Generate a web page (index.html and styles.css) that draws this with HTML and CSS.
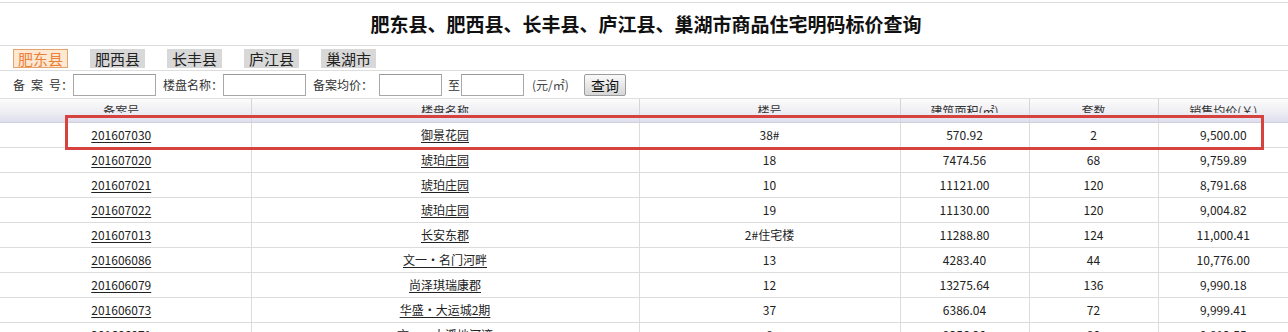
FILE: index.html
```html
<!DOCTYPE html>
<html lang="zh-CN">
<head>
<meta charset="utf-8">
<title>商品住宅明码标价查询</title>
<link rel="stylesheet" href="styles.css">
</head>
<body>
<div class="page">
  <div class="title-bar">
    <h1 class="title">肥东县、肥西县、长丰县、庐江县、巢湖市商品住宅明码标价查询</h1>
  </div>
  <div class="tabs">
    <span class="tab tab-active">肥东县</span>
    <span class="tab">肥西县</span>
    <span class="tab">长丰县</span>
    <span class="tab">庐江县</span>
    <span class="tab">巢湖市</span>
  </div>
  <div class="search">
    <span class="lbl">备&ensp;案&ensp;号：</span>
    <input class="inp inp-wide gap-r7" type="text">
    <span class="lbl">楼盘名称：</span>
    <input class="inp inp-wide gap-r7" type="text">
    <span class="lbl gap-r6">备案均价：</span>
    <input class="inp inp-narrow gap-r6" type="text">
    <span class="lbl">至</span>
    <input class="inp inp-narrow gap-l1 gap-r8" type="text">
    <span class="lbl unit">(元/㎡)</span>
    <button class="btn" type="button">查询</button>
  </div>
  <div class="table-wrap">
    <table class="grid">
      <colgroup>
        <col class="c1"><col class="c2"><col class="c3"><col class="c4"><col class="c5"><col class="c6">
      </colgroup>
      <thead>
        <tr>
          <th class="first"><div class="hclip">备案号</div></th>
          <th><div class="hclip">楼盘名称</div></th>
          <th><div class="hclip">楼号</div></th>
          <th><div class="hclip">建筑面积(㎡)</div></th>
          <th><div class="hclip">套数</div></th>
          <th class="last"><div class="hclip">销售均价(￥)</div></th>
        </tr>
      </thead>
      <tbody>
        <tr><td class="first"><a href="#">201607030</a></td><td><a href="#">御景花园</a></td><td>38#</td><td>570.92</td><td>2</td><td class="last">9,500.00</td></tr>
        <tr><td class="first"><a href="#">201607020</a></td><td><a href="#">琥珀庄园</a></td><td>18</td><td>7474.56</td><td>68</td><td class="last">9,759.89</td></tr>
        <tr><td class="first"><a href="#">201607021</a></td><td><a href="#">琥珀庄园</a></td><td>10</td><td>11121.00</td><td>120</td><td class="last">8,791.68</td></tr>
        <tr><td class="first"><a href="#">201607022</a></td><td><a href="#">琥珀庄园</a></td><td>19</td><td>11130.00</td><td>120</td><td class="last">9,004.82</td></tr>
        <tr><td class="first"><a href="#">201607013</a></td><td><a href="#">长安东郡</a></td><td>2#住宅楼</td><td>11288.80</td><td>124</td><td class="last">11,000.41</td></tr>
        <tr><td class="first"><a href="#">201606086</a></td><td><a href="#">文一・名门河畔</a></td><td>13</td><td>4283.40</td><td>44</td><td class="last">10,776.00</td></tr>
        <tr><td class="first"><a href="#">201606079</a></td><td><a href="#">尚泽琪瑞康郡</a></td><td>12</td><td>13275.64</td><td>136</td><td class="last">9,990.18</td></tr>
        <tr><td class="first"><a href="#">201606073</a></td><td><a href="#">华盛・大运城2期</a></td><td>37</td><td>6386.04</td><td>72</td><td class="last">9,999.41</td></tr>
        <tr><td class="first"><a href="#">201606071</a></td><td><a href="#">文一・大溪地河湾</a></td><td>8</td><td>9356.20</td><td>80</td><td class="last">9,812.55</td></tr>
      </tbody>
    </table>
  </div>
  <div class="highlight"></div>
</div>
</body>
</html>
```

FILE: styles.css
```css
html, body {
  margin: 0;
  padding: 0;
  background: #ffffff;
}

body {
  font-family: "Noto Sans CJK SC", "Liberation Sans", sans-serif;
  font-size: 12px;
  color: #222;
  overflow: hidden;
}

.page {
  position: relative;
  padding-top: 2px;
}

.title-bar {
  border-top: 1px solid #dedede;
  border-bottom: 1px solid #dedede;
  height: 42px;
  display: flex;
  align-items: center;
  justify-content: center;
}

.title {
  margin: 0;
  font-size: 19px;
  font-weight: bold;
  color: #111;
  line-height: 22px;
  padding-left: 4px;
}

.tabs {
  box-sizing: border-box;
  height: 25px;
  border-bottom: 1px solid #dedede;
  padding: 3px 0 0 13px;
  display: flex;
  gap: 22px;
  align-items: flex-start;
}

.tab {
  width: 55px;
  height: 19px;
  box-sizing: border-box;
  border: 1px solid #d8d8d8;
  background: #d8d8d8;
  color: #222;
  font-size: 15px;
  line-height: 17px;
  text-align: center;
}

.tab-active {
  border-color: #e6a46a;
  background: #fde8d4;
  color: #ec8035;
}

.search {
  box-sizing: border-box;
  height: 28px;
  border-bottom: 1px solid #dedede;
  padding: 3px 0 0 13px;
  display: flex;
  align-items: flex-start;
}

.lbl {
  height: 22px;
  line-height: 22px;
  font-size: 12px;
  color: #333;
  white-space: nowrap;
}

.unit {
  color: #444;
  margin-right: 15px;
}

.inp {
  height: 22px;
  box-sizing: border-box;
  border: 1px solid #a8a8a8;
  border-top-color: #9a9a9a;
  margin: 0;
  padding: 0 2px;
  background: #fff;
  font-size: 12px;
}

.inp-wide { width: 83px; }
.inp-narrow { width: 63px; }

.gap-r6 { margin-right: 6px; }
.gap-r7 { margin-right: 7px; }
.gap-r8 { margin-right: 8px; }
.gap-l1 { margin-left: 1px; }

.btn {
  width: 42px;
  height: 22px;
  margin: 0;
  padding: 0;
  box-sizing: border-box;
  border: 1px solid #9c9c9c;
  border-radius: 2px;
  background: linear-gradient(#fafafa, #e6e6e6 55%, #d6d6d6);
  font-family: "Noto Sans CJK SC", sans-serif;
  font-size: 14px;
  line-height: 18px;
  color: #111;
}

.table-wrap {
  width: 100%;
}

.grid {
  width: 1288px;
  border-collapse: collapse;
  table-layout: fixed;
}

.c1 { width: 251px; }
.c2 { width: 388px; }
.c3 { width: 261px; }
.c4 { width: 129px; }
.c5 { width: 129px; }
.c6 { width: 130px; }

.grid th {
  height: 23px;
  padding: 0;
  font-weight: normal;
  font-size: 12px;
  color: #333;
  text-align: center;
  vertical-align: top;
  background: linear-gradient(#fcfcfc, #eeeef3 55%, #dedeef);
  border-left: 1px solid #d6d6d6;
  border-right: 1px solid #d6d6d6;
  border-bottom: 1px solid #cfcfdc;
}

.hclip {
  height: 14px;
  line-height: 24px;
  overflow: hidden;
}

.grid td {
  height: 24px;
  padding: 0;
  line-height: 24px;
  text-align: center;
  color: #222;
  border-left: 1px solid #dcdcdc;
  border-right: 1px solid #dcdcdc;
  border-bottom: 1px solid #dcdcdc;
  white-space: nowrap;
  letter-spacing: 0;
}

.grid .first {
  border-left: none;
  padding-right: 8px;
}

.grid .last {
  border-right: none;
}

.grid a {
  color: #222;
  text-decoration: underline;
  text-underline-offset: 2px;
}

.highlight {
  position: absolute;
  left: 65px;
  top: 115px;
  width: 1199px;
  height: 35px;
  box-sizing: border-box;
  border: 3px solid #d6433e;
  pointer-events: none;
}
```
